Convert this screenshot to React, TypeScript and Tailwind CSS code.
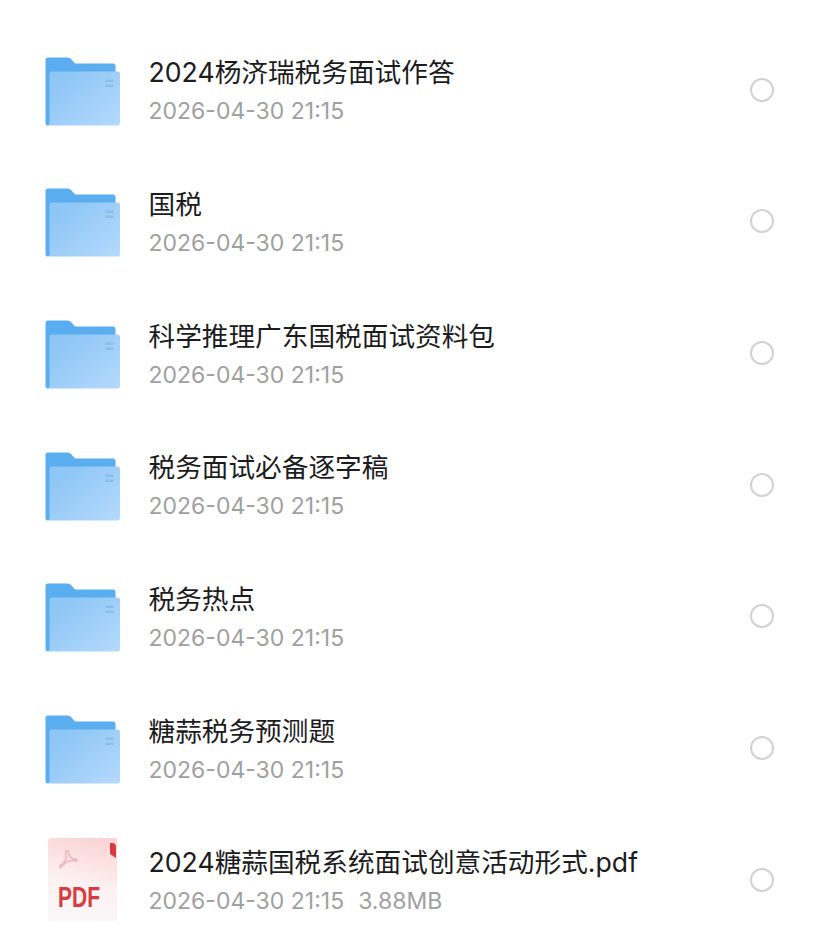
const font = { fontFamily: 'Inter, "Noto Sans CJK SC", sans-serif' };

type FileRow = {
  name: string;
  size?: string;
  pdf?: boolean;
};

const files: FileRow[] = [
  { name: "2024杨济瑞税务面试作答" },
  { name: "国税" },
  { name: "科学推理广东国税面试资料包" },
  { name: "税务面试必备逐字稿" },
  { name: "税务热点" },
  { name: "糖蒜税务预测题" },
  { name: "2024糖蒜国税系统面试创意活动形式.pdf", size: "3.88MB", pdf: true },
];

function FolderIcon({ id }: { id: number }) {
  return (
    <svg width="76" height="70" viewBox="0 0 76 70" className="mt-1 shrink-0">
      <defs>
        <linearGradient id={`front-${id}`} x1="0.1" y1="0.2" x2="1" y2="1">
          <stop offset="0" stopColor="#8ec6f5" />
          <stop offset="1" stopColor="#b5dafd" />
        </linearGradient>
      </defs>
      <path
        d="M3 0.500 H22 Q25 0.500 26.500 2.500 L30 6.500 H68 Q70.500 6.500 70.500 9 V20 H5 V66 Q5 68.500 3 68.500 Q0.500 68.500 0.500 66 V3 Q0.500 0.500 3 0.500 Z"
        fill="#5aaef0"
      />
      <path
        d="M4.500 17 Q4.500 14.500 7 14.500 H72.500 Q75 14.500 75 17 V66 Q75 68.500 72.500 68.500 H4.500 Z"
        fill={`url(#front-${id})`}
      />
      <rect x="60.500" y="22.500" width="8" height="2.500" fill="#8cbeea" />
      <rect x="60.500" y="27.500" width="8" height="2.500" fill="#8cbeea" />
    </svg>
  );
}

function PdfIcon() {
  return (
    <svg width="76" height="86" viewBox="0 0 76 86" className="shrink-0">
      <defs>
        <linearGradient id="pdf-bg" x1="0.6" y1="0" x2="0.4" y2="1">
          <stop offset="0" stopColor="#fbd5d5" />
          <stop offset="0.55" stopColor="#fdf1f1" />
          <stop offset="1" stopColor="#f9f7f8" />
        </linearGradient>
      </defs>
      <path d="M6 1 H72 V81 Q72 84 69 84 H6 Q3 84 3 81 V4 Q3 1 6 1 Z" fill="url(#pdf-bg)" />
      <path d="M65 6 H67 Q71 6 71 10 V21 L65 17 Z" fill="#d93a3f" />
      <path
        d="M23 14 C21 12 20 15 21 18 C22 22 19 26 15 29 C14 31 16 31 18 28 C21 25 26 23 31 24 C33 24 32 22 29 22 C26 22 24 18 23 14 Z"
        fill="none"
        stroke="#edbcbf"
        strokeWidth="1.800"
      />
      <text
        x="13"
        y="70"
        fill="#d83c40"
        fontFamily="Liberation Sans"
        fontSize="30"
        fontWeight="700"
        textLength="42"
        lengthAdjust="spacingAndGlyphs"
      >
        PDF
      </text>
    </svg>
  );
}

export default function App() {
  return (
    <div className="h-[941px] w-[828px] overflow-hidden bg-white pt-6" style={font}>
      {files.map((file, i) => (
        <div key={file.name} className="flex h-[131.67px] items-center pl-[45px] pr-[54px]">
          <div className="flex w-[103.5px] shrink-0 items-center">
            {file.pdf ? <PdfIcon /> : <FolderIcon id={i} />}
          </div>
          <div className="mt-[3px] flex min-w-0 flex-1 flex-col">
            <div className="h-[38px] text-[26.67px] leading-[38px] text-[#1c1c1e]">{file.name}</div>
            <div className="mt-[2px] h-[36px] text-[23px] leading-[36px] text-[#a0a0a0]">
              2026-04-30 21:15
              {file.size && <span className="ml-[14px]">{file.size}</span>}
            </div>
          </div>
          <div className="h-6 w-6 shrink-0 rounded-full border-2 border-[#d2d2d2]" />
        </div>
      ))}
    </div>
  );
}
